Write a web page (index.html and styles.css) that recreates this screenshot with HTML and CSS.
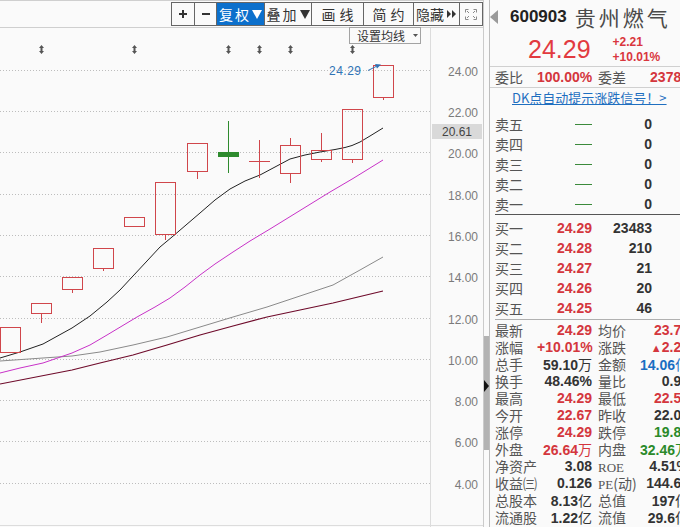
FILE: index.html
```html
<!DOCTYPE html>
<html lang="zh-CN">
<head>
<meta charset="utf-8">
<title>600903 贵州燃气</title>
<link rel="stylesheet" href="styles.css">
</head>
<body>
<div class="app">
  <div class="chart">
    <div class="toolbar">
      <div class="tools">
        <div class="btn w22"><svg width="8" height="8"><path d="M0 4H8M4 0V8" stroke="#333" stroke-width="2"/></svg></div>
        <div class="btn w21"><svg width="8" height="2"><path d="M0 1H8" stroke="#333" stroke-width="2"/></svg></div>
        <div class="btn w47 on sp">复权<svg class="tri" width="10" height="9"><path d="M0 0H10L5 9Z" fill="#fff"/></svg></div>
        <div class="btn w46 sp">叠加<svg class="tri" width="10" height="9"><path d="M0 0H10L5 9Z" fill="#333"/></svg></div>
        <div class="btn w47 sp2">画线</div>
        <div class="btn w45 sp2">简约</div>
        <div class="btn w45">隐藏<svg class="ff" width="10" height="8"><path d="M0 0L4 4L0 8ZM5 0L9 4L5 8Z" fill="#333"/></svg></div>
        <div class="btn w22"><svg width="12" height="11"><path d="M0.5 3.5V0.5H3.5M8.5 0.5H11.5V3.5M0.5 7.5V10.5H3.5M8.5 10.5H11.5V7.5M2 2L4 4M10 2L8 4M2 9L4 7M10 9L8 7" stroke="#8a8a8a" stroke-width="1" fill="none"/></svg></div>
      </div>
    </div>
    <div class="ma-set">设置均线<svg class="caret" width="5" height="3"><path d="M0 0H5L2.5 3Z" fill="#555"/></svg></div>
    <svg class="plot" width="483" height="499" viewBox="0 28 483 499">
      <defs>
        <path id="mk" d="M0.5 45L3 48H1.5V51H3L0.5 54L-2 51H-0.5V48H-2Z" fill="#555"/>
      </defs>
      <g stroke="#bdbdbd" stroke-dasharray="1 2" stroke-width="1">
        <path d="M0 70.5H430M0 111.5H430M0 152.5H430M0 194.5H430M0 235.5H430M0 276.5H430M0 318.5H430M0 359.5H430M0 400.5H430M0 441.5H430M0 483.5H430"/>
      </g>
      <path d="M430.5 28V527M0 525.5H483" stroke="#dcdcdc" stroke-width="1"/>
      <g class="ylab" text-anchor="end">
        <text x="478" y="75.5">24.00</text>
        <text x="478" y="116.5">22.00</text>
        <text x="478" y="157.5">20.00</text>
        <text x="478" y="199.5">18.00</text>
        <text x="478" y="240.5">16.00</text>
        <text x="478" y="281.5">14.00</text>
        <text x="478" y="323.5">12.00</text>
        <text x="478" y="364.5">10.00</text>
        <text x="478" y="405.5">8.00</text>
        <text x="478" y="446.5">6.00</text>
        <text x="478" y="488.5">4.00</text>
      </g>
      <rect x="432" y="124" width="50" height="15" fill="#d9d9d9"/>
      <text class="cur" x="457" y="136" text-anchor="middle">20.61</text>
      <use href="#mk" x="41"/>
      <use href="#mk" x="134"/>
      <use href="#mk" x="228"/>
      <use href="#mk" x="259"/>
      <use href="#mk" x="290"/>
      <use href="#mk" x="352"/>
      <g fill="none" stroke-width="1">
        <polyline stroke="#6e0a2a" stroke-width="1.2" points="0,384 72,370 100,363 133,355 167,345 200,335 233,326 267,317 300,310 333,303 358,297 383,291"/>
        <polyline stroke="#8a8a8a" points="0,361 43,358 72,356 100,352 133,345 167,337 200,327 233,317 267,307 300,296 333,285 360,270 383,257"/>
        <polyline stroke="#c832c8" points="0,373 20,368 43,363 72,353 90,345 107,335 122,326 137,317 155,307 170,298 185,287 200,275 215,264 233,252 250,241 270,229 300,210.5 330,192 353,178.5 383,160"/>
        <polyline stroke="#222" points="0,358 20,352 43,344 72,328 90,316 107,302 120,290 133,276 147,261 160,247 172,237 186,225 200,213 215,200 230,189 245,181 260,175 275,167 290,159 305,155 320,152 335,149.5 345,147.5 352,145.5 360,142 370,136 383,128"/>
      </g>
      <g fill="none" stroke="#d0464b" stroke-width="1">
        <rect x="0.5" y="327.5" width="20" height="25"/>
        <rect x="31.5" y="303.5" width="20" height="10"/>
        <path d="M41.5 313.5V323"/>
        <rect x="62.5" y="277.5" width="20" height="12"/>
        <path d="M72.5 289.5V293"/>
        <rect x="93.5" y="248.5" width="20" height="20"/>
        <path d="M103.5 268.5V271"/>
        <rect x="124.5" y="217.5" width="20" height="9"/>
        <rect x="155.5" y="182.5" width="20" height="52"/>
        <path d="M165.5 234.5V240"/>
        <rect x="187.5" y="143.5" width="20" height="28"/>
        <path d="M197.5 171.5V179"/>
        <path d="M249 161.5H270M259.5 140V178"/>
        <rect x="280.5" y="145.5" width="20" height="28"/>
        <path d="M290.5 138V145.5M290.5 173.5V183"/>
        <rect x="311.5" y="150.5" width="20" height="9"/>
        <path d="M321.5 133V150.5M321.5 159.5V162"/>
        <rect x="342.5" y="109.5" width="20" height="50"/>
        <path d="M352.5 159.5V163"/>
        <rect x="373.5" y="65.5" width="20" height="32"/>
        <path d="M383.5 97.5V100"/>
      </g>
      <path d="M228.5 121V173" stroke="#2e8b2e" stroke-width="1"/>
      <rect x="218" y="152" width="21" height="5" fill="#2e8b2e"/>
      <text class="mark" x="329" y="75">24.29</text>
      <path d="M368 70.5L376 66.5" stroke="#2f73b5" stroke-width="1"/>
      <path d="M375 64L381 64.5L377 68.5Z" fill="#2f73b5"/>
    </svg>
  </div>
  <div class="rail"><div class="thumb"><span class="arrow"></span></div></div>
  <div class="panel">
    <div class="hd1"><span class="back"></span><span class="code">600903</span><span class="name">贵州燃气</span></div>
    <div class="hd2">
      <span class="price">24.29</span>
      <div class="chg"><span>+2.21</span><span>+10.01%</span></div>
    </div>
    <div class="grid wb">
      <span class="lb">委比</span><span class="v r">100.00%</span><span class="lb l2">委差</span><span class="v r">23780</span>
    </div>
    <div class="dk"><a class="link">DK点自动提示涨跌信号！&gt;</a></div>
    <div class="book sell">
      <div class="ob"><span class="lb">卖五</span><span class="dash"></span><span class="v">0</span></div>
      <div class="ob"><span class="lb">卖四</span><span class="dash"></span><span class="v">0</span></div>
      <div class="ob"><span class="lb">卖三</span><span class="dash"></span><span class="v">0</span></div>
      <div class="ob"><span class="lb">卖二</span><span class="dash"></span><span class="v">0</span></div>
      <div class="ob"><span class="lb">卖一</span><span class="dash"></span><span class="v">0</span></div>
    </div>
    <div class="book buy">
      <div class="ob"><span class="lb">买一</span><span class="v r">24.29</span><span class="v">23483</span></div>
      <div class="ob"><span class="lb">买二</span><span class="v r">24.28</span><span class="v">210</span></div>
      <div class="ob"><span class="lb">买三</span><span class="v r">24.27</span><span class="v">21</span></div>
      <div class="ob"><span class="lb">买四</span><span class="v r">24.26</span><span class="v">20</span></div>
      <div class="ob"><span class="lb">买五</span><span class="v r">24.25</span><span class="v">46</span></div>
    </div>
    <div class="grid stats">
      <span class="lb">最新</span><span class="v r">24.29</span><span class="lb l2">均价</span><span class="v r">23.74</span>
      <span class="lb">涨幅</span><span class="v r">+10.01%</span><span class="lb l2">涨跌</span><span class="v r"><span class="up">▲</span>2.21</span>
      <span class="lb">总手</span><span class="v">59.10<span class="u">万</span></span><span class="lb l2">金额</span><span class="v b">14.06<span class="u">亿</span></span>
      <span class="lb">换手</span><span class="v">48.46%</span><span class="lb l2">量比</span><span class="v">0.93</span>
      <span class="lb">最高</span><span class="v r">24.29</span><span class="lb l2">最低</span><span class="v r">22.53</span>
      <span class="lb">今开</span><span class="v r">22.67</span><span class="lb l2">昨收</span><span class="v">22.08</span>
      <span class="lb">涨停</span><span class="v r">24.29</span><span class="lb l2">跌停</span><span class="v g">19.87</span>
      <span class="lb">外盘</span><span class="v r">26.64<span class="u">万</span></span><span class="lb l2">内盘</span><span class="v g">32.46<span class="u">万</span></span>
      <span class="lb">净资产</span><span class="v">3.08</span><span class="lb l2"><span class="lat">ROE</span></span><span class="v">4.51%</span>
      <span class="lb">收益㈢</span><span class="v">0.126</span><span class="lb l2"><span class="lat">PE</span>(动)</span><span class="v">144.65</span>
      <span class="lb">总股本</span><span class="v">8.13<span class="u">亿</span></span><span class="lb l2">总值</span><span class="v">197<span class="u">亿</span></span>
      <span class="lb">流通股</span><span class="v">1.22<span class="u">亿</span></span><span class="lb l2">流值</span><span class="v">29.6<span class="u">亿</span></span>
    </div>
  </div>
</div>
</body>
</html>
```

FILE: styles.css
```css
html, body {
  margin: 0;
  padding: 0;
  overflow: hidden;
}
body {
  width: 680px;
  height: 527px;
  background: #fafafa;
  font-family: "Liberation Sans", "Noto Sans CJK SC", sans-serif;
  color: #333;
}
.app {
  display: flex;
  width: 700px;
  height: 527px;
}

/* ---------- chart ---------- */
.chart {
  position: relative;
  width: 483px;
  flex: none;
  border-right: 1px solid #cbcbcb;
  display: flex;
  flex-direction: column;
}
.toolbar {
  box-sizing: border-box;
  height: 28px;
  border-top: 1px solid #cfcfcf;
  border-bottom: 1px solid #cfcfcf;
  padding-top: 1px;
  display: flex;
  justify-content: flex-end;
  align-items: flex-start;
}
.tools {
  display: flex;
  box-sizing: border-box;
  height: 24px;
  border: 1px solid #666;
}
.btn {
  display: flex;
  align-items: center;
  justify-content: center;
  height: 22px;
  font-family: "Noto Sans CJK SC", sans-serif;
  font-size: 14px;
  color: #333;
  background: #fafafa;
}
.btn + .btn { border-left: 1px solid #666; }
.w21 { width: 21px; }
.w22 { width: 22px; }
.w45 { width: 45px; }
.w46 { width: 46px; }
.w47 { width: 47px; }
.on { background: #0c70cc; color: #fff; }
.sp { letter-spacing: 2px; }
.sp2 { letter-spacing: 4px; padding-left: 4px; }
.tri { margin-left: 1px; }
.ff { margin-left: 3px; }

.ma-set {
  position: absolute;
  left: 349px;
  top: 27px;
  box-sizing: border-box;
  width: 72px;
  height: 17px;
  border: 1px solid #a3a3a3;
  background: #fafafa;
  padding-left: 7px;
  display: flex;
  align-items: center;
  font-family: "Noto Sans CJK SC", sans-serif;
  font-size: 12px;
  color: #333;
}
.caret { margin-left: 8px; }
.plot { display: block; }
.ylab text {
  font-family: "Liberation Sans", sans-serif;
  font-size: 12px;
  fill: #7a7a7a;
}
.cur {
  font-family: "Liberation Sans", sans-serif;
  font-size: 12px;
  fill: #444;
}
.mark {
  font-family: "Liberation Sans", sans-serif;
  font-size: 12px;
  letter-spacing: 0.5px;
  fill: #2f73b5;
}

/* ---------- rail ---------- */
.rail {
  width: 5px;
  flex: none;
}
.thumb {
  position: relative;
  margin-top: 336px;
  height: 114px;
  background: #b3b3b3;
}
.arrow {
  position: absolute;
  left: 0;
  top: 44px;
  width: 0;
  height: 0;
  border-left: 5px solid #111;
  border-top: 6px solid transparent;
  border-bottom: 6px solid transparent;
}

/* ---------- panel ---------- */
.panel {
  width: 200px;
  flex: none;
  border-left: 1px solid #bdbdbd;
}
.hd1 {
  height: 34px;
  display: flex;
  align-items: center;
}
.back {
  width: 0;
  height: 0;
  border-right: 8px solid #9a9a9a;
  border-top: 7px solid transparent;
  border-bottom: 7px solid transparent;
}
.code {
  margin-left: 12px;
  font-weight: bold;
  font-size: 17px;
  color: #222;
}
.name {
  margin-left: 8px;
  font-family: "Noto Sans CJK SC", sans-serif;
  font-size: 21px;
  letter-spacing: 3px;
  color: #4a4a4a;
}
.hd2 {
  height: 32px;
  display: flex;
  align-items: flex-start;
  border-bottom: 1px solid #d0d0d0;
}
.price {
  margin-left: 38px;
  margin-top: 3px;
  font-size: 25px;
  line-height: 25px;
  color: #e23a3f;
}
.chg {
  margin-left: 22px;
  margin-top: 1px;
  display: flex;
  flex-direction: column;
  font-weight: bold;
  font-size: 12px;
  line-height: 15px;
  color: #d9363e;
}
.grid {
  display: grid;
  grid-template-columns: 42px 55px 46px 51px;
  padding-left: 5px;
  white-space: nowrap;
  align-items: center;
}
.wb {
  grid-auto-rows: 20px;
  height: 20px;
  line-height: 20px;
  border-bottom: 1px solid #d0d0d0;
}
.lb {
  font-family: "Noto Sans CJK SC", sans-serif;
  font-size: 14px;
  color: #555;
}
.l2 { padding-left: 6px; }
.lat {
  font-family: "Liberation Serif", serif;
  font-size: 13px;
}
.v {
  text-align: right;
  font-weight: bold;
  font-size: 14px;
  color: #333;
}
.r { color: #d4363d; }
.g { color: #2a8a2a; }
.b { color: #1a6ec2; }
.u {
  font-family: "Noto Sans CJK SC", sans-serif;
  font-weight: normal;
}
.up { font-size: 11px; }
.dk {
  height: 22px;
  line-height: 20px;
  padding-left: 22px;
  font-family: "Noto Sans CJK SC", sans-serif;
  font-size: 13px;
}
.link {
  color: #1f6fc0;
  text-decoration: underline;
}
.book { margin-left: 5px; }
.sell {
  padding-top: 4px;
  border-bottom: 1px solid #555;
}
.buy {
  padding-top: 3px;
  padding-bottom: 1px;
  border-bottom: 1px solid #b0b0b0;
}
.ob {
  display: grid;
  grid-template-columns: 42px 55px 60px;
  height: 20px;
  line-height: 20px;
  align-items: center;
}
.dash {
  justify-self: end;
  width: 17px;
  height: 1px;
  background: #3b8a3b;
}
.stats {
  padding-top: 2px;
  grid-auto-rows: 17px;
  line-height: 17px;
}
```
